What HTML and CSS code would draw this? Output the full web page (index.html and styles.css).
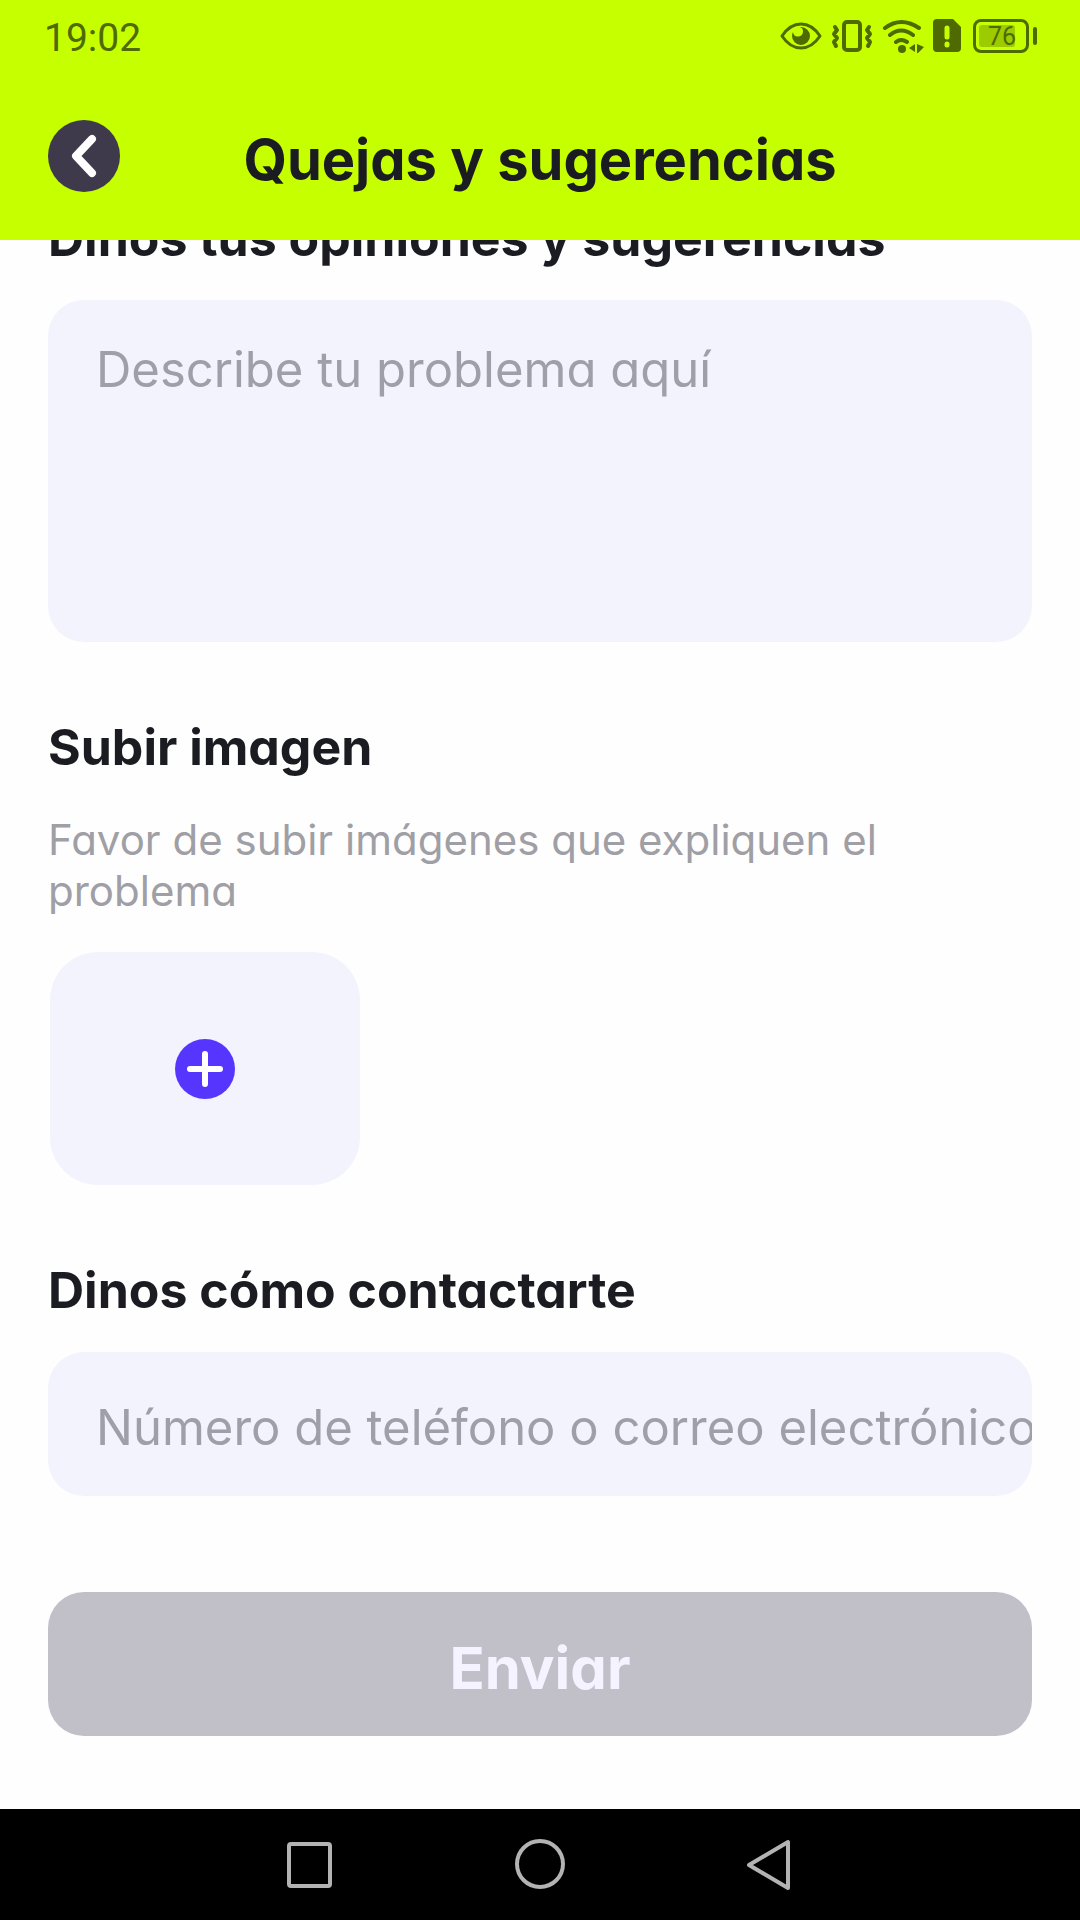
FILE: index.html
```html
<!DOCTYPE html>
<html lang="es">
<head>
<meta charset="utf-8">
<meta name="viewport" content="width=device-width, initial-scale=1">
<title>Quejas y sugerencias</title>
<link rel="stylesheet" href="styles.css">
</head>
<body>
<header class="header">
  <div class="status">
    <time class="clock">19:02</time>
    <div class="status-icons">
      <svg class="icon-eye" width="42" height="34" viewBox="0 0 42 34" aria-hidden="true">
        <path d="M2 17Q10 5 21 5T40 17Q32 29 21 29T2 17Z" fill="none" stroke="currentColor" stroke-width="3" stroke-linejoin="round"/>
        <path d="M21 8a9 9 0 1 1-9 9q0-2 1-4a5 5 0 1 0 7-5Z" fill="currentColor"/>
      </svg>
      <svg class="icon-vibrate" width="42" height="34" viewBox="0 0 42 34" aria-hidden="true">
        <g fill="none" stroke="currentColor" stroke-width="4" stroke-linejoin="round" stroke-linecap="round">
          <rect x="13" y="3" width="16" height="28" rx="3"/>
          <path d="M4 8l2 3-3 4 3 4-3 4 2 4M38 8l-2 3 3 4-3 4 3 4-2 4" stroke-width="4"/>
        </g>
      </svg>
      <svg class="icon-wifi" width="42" height="34" viewBox="0 0 42 34" aria-hidden="true">
        <g fill="none" stroke="currentColor" stroke-width="4" stroke-linecap="round">
          <path d="M3 9Q19-3 37 9M8 16q11-9 23 0M14 23q5-4 11 0"/>
        </g>
        <circle cx="20" cy="30" r="4" fill="currentColor"/>
        <path d="M33 25v8l-6-4zM35 25l7 3-6 6h-1z" fill="currentColor"/>
      </svg>
      <svg class="icon-sim" width="28" height="34" viewBox="0 0 28 34" aria-hidden="true">
        <path d="M4 0h16l8 8v21q0 4-4 4H4q-4 0-4-4V4q0-4 4-4Z" fill="currentColor"/>
        <path d="M14 9v9M14 25v1" stroke="#c5ff00" stroke-width="5" stroke-linecap="round"/>
      </svg>
      <span class="battery">
        <span class="battery-case"><span class="battery-level">76</span></span>
        <span class="battery-tip"></span>
      </span>
    </div>
  </div>
  <div class="titlebar">
    <button class="back" type="button" aria-label="Atrás">
      <svg width="72" height="72" viewBox="0 0 72 72" aria-hidden="true">
        <path d="M44 19L28 36l16 17" fill="none" stroke="#fff" stroke-width="8" stroke-linecap="round" stroke-linejoin="round"/>
      </svg>
    </button>
    <h1 class="title">Quejas y sugerencias</h1>
  </div>
</header>
<main class="scroller">
  <form class="form">
    <section class="section">
      <h2 class="heading"><label for="opinion">Dinos tus opiniones y sugerencias</label></h2>
      <textarea class="field field-area" id="opinion" placeholder="Describe tu problema aquí"></textarea>
    </section>
    <section class="section">
      <h2 class="heading">Subir imagen</h2>
      <p class="hint">Favor de subir imágenes que expliquen el problema</p>
      <button class="upload" type="button" aria-label="Subir imagen">
        <svg width="60" height="60" viewBox="0 0 60 60" aria-hidden="true">
          <circle cx="30" cy="30" r="30" fill="#5636ff"/>
          <path d="M30 15v30M15 30h30" stroke="#fff" stroke-width="6" stroke-linecap="round"/>
        </svg>
      </button>
    </section>
    <section class="section">
      <h2 class="heading"><label for="contacto">Dinos cómo contactarte</label></h2>
      <input class="field field-line" id="contacto" type="text" placeholder="Número de teléfono o correo electrónico">
    </section>
    <button class="submit" type="submit">Enviar</button>
  </form>
</main>
<nav class="navbar" aria-label="Sistema">
  <button class="nav-button" type="button" aria-label="Recientes">
    <svg width="52" height="52" viewBox="0 0 52 52" aria-hidden="true"><rect x="5" y="5" width="41" height="42" rx="2"/></svg>
  </button>
  <button class="nav-button" type="button" aria-label="Inicio">
    <svg width="52" height="52" viewBox="0 0 52 52" aria-hidden="true"><circle cx="26" cy="25" r="23"/></svg>
  </button>
  <button class="nav-button" type="button" aria-label="Volver">
    <svg width="52" height="52" viewBox="0 0 52 52" aria-hidden="true"><path d="M44 3v46L5 26Z"/></svg>
  </button>
</nav>
</body>
</html>
```
FILE: styles.css
```css
* {
  box-sizing: border-box;
}

body {
  display: flex;
  flex-direction: column;
  min-height: 100vh;
  margin: 0;
  background: #fefefe;
  color: #1b1b22;
  font-family: Inter, "Open Sans", sans-serif;
  font-feature-settings: "cv11";
}

button,
input,
textarea {
  border: 0;
  padding: 0;
  font: inherit;
  font-feature-settings: inherit;
}

svg {
  display: block;
}

.header {
  height: 240px;
  background: #c5ff00;
}

.status {
  display: flex;
  align-items: center;
  justify-content: space-between;
  height: 72px;
  padding: 0 43px 0 44px;
  color: #4f6a00;
}

.clock {
  padding-top: 4px;
  font-family: Roboto, sans-serif;
  font-size: 39px;
  line-height: 48px;
}

.status-icons {
  display: flex;
  align-items: center;
  gap: 9px;
}

.battery {
  display: flex;
  align-items: center;
  gap: 4px;
}

.battery-case {
  width: 56px;
  height: 34px;
  margin-left: 3px;
  padding: 3px;
  border: 3px solid currentColor;
  border-radius: 8px;
}

.battery-level {
  display: block;
  width: 36px;
  height: 22px;
  border-radius: 3px;
  background: #9ccb00;
  font-family: Roboto, sans-serif;
  font-size: 25px;
  line-height: 24px;
  text-indent: 9px;
}

.battery-tip {
  width: 4px;
  height: 18px;
  border-radius: 2px;
  background: currentColor;
}

.titlebar {
  display: grid;
  grid-template-columns: 72px 1fr 72px;
  align-items: center;
  padding: 48px 48px 0;
}

.back {
  width: 72px;
  height: 72px;
  border-radius: 50%;
  background: #3e394b;
}

.title {
  margin: 0;
  padding-top: 8px;
  font-size: 56px;
  line-height: 64px;
  font-weight: 700;
  text-align: center;
}

.scroller {
  flex: 1;
  overflow: hidden;
}

.form {
  display: flex;
  flex-direction: column;
  gap: 75px;
  margin-top: -32px;
  padding: 0 48px 72px;
}

.heading {
  margin: 0 0 32px;
  font-size: 50px;
  line-height: 60px;
  font-weight: 700;
}

.field {
  display: block;
  width: 100%;
  border-radius: 36px;
  background: #f3f3fe;
  color: inherit;
  font-size: 49px;
  line-height: 60px;
  resize: none;
}

.field::placeholder {
  color: #9f9fa9;
  opacity: 1;
}

.field-area {
  height: 342px;
  padding: 40px 48px;
}

.field-line {
  height: 144px;
  padding: 6px 0 0 48px;
}

.hint {
  margin: 0 0 36px;
  padding-top: 5px;
  color: #9f9fa5;
  font-size: 42px;
  line-height: 51px;
}

.upload {
  display: grid;
  place-items: center;
  width: 310px;
  height: 233px;
  margin-left: 2px;
  border-radius: 48px;
  background: #f3f3fe;
}

.submit {
  height: 144px;
  margin-top: 21px;
  padding-top: 8px;
  border-radius: 36px;
  background: #c1c0c9;
  color: #f4f3ff;
  font-size: 58px;
  font-weight: 700;
}

.navbar {
  display: flex;
  align-items: center;
  justify-content: center;
  gap: 178px;
  height: 111px;
  background: #000;
}

.nav-button {
  background: none;
}

.nav-button svg {
  fill: none;
  stroke: #b3b3b3;
  stroke-width: 4;
  stroke-linejoin: round;
}
```
